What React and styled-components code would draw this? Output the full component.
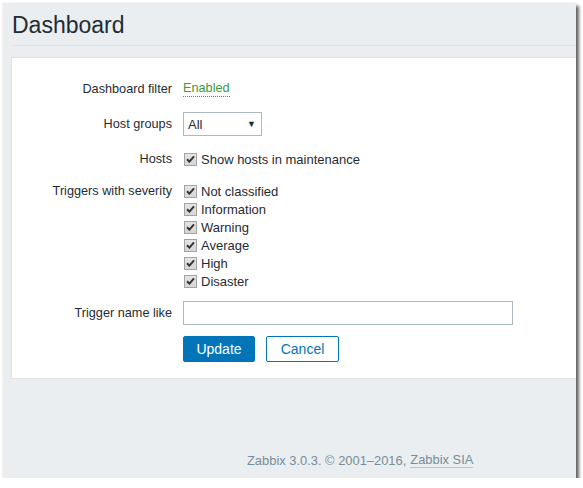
import React from "react";
import styled, { createGlobalStyle } from "styled-components";

const GlobalStyle = createGlobalStyle`
  html, body {
    margin: 0;
    padding: 0;
    background: #ffffff;
  }
  body {
    font-family: "Liberation Sans", Arial, sans-serif;
    color: #1f2c33;
  }
`;

const Window = styled.div`
  margin: 3px 0 0 3px;
  width: 573px;
  height: 475px;
  box-sizing: border-box;
  padding-left: 8px;
  background: #ebeef0;
  box-shadow: 3px 3px 3px rgba(0, 0, 0, 0.6), 0 0 2px rgba(0, 0, 0, 0.12);
  display: flex;
  flex-direction: column;
`;

const Header = styled.div`
  height: 43px;
  box-sizing: border-box;
  padding: 9px 0 0 1px;
  border-bottom: 1px solid #dde3e7;
`;

const Title = styled.h1`
  margin: 0;
  font-size: 23px;
  font-weight: normal;
  line-height: 26px;
  color: #1f2c33;
`;

const Panel = styled.div`
  margin-top: 11px;
  background: #ffffff;
  border: 1px solid #dde3e7;
  border-right: none;
  padding: 19px 0 16px;
`;

const Form = styled.div`
  display: grid;
  grid-template-columns: 160px 1fr;
  column-gap: 11px;
  row-gap: 11px;
  font-size: 12.7px;
`;

const Label = styled.div`
  text-align: right;
  min-height: ${(p) => (p.$top ? "18px" : "24px")};
  line-height: ${(p) => (p.$top ? "18px" : "24px")};
`;

const Field = styled.div`
  min-height: 24px;
  display: flex;
  align-items: ${(p) => (p.$top ? "flex-start" : "center")};
  gap: 11px;
`;

const FilterLink = styled.span`
  color: #3c9a3f;
  border-bottom: 1px dotted #3c9a3f;
  line-height: 15px;
`;

const Select = styled.div`
  width: 79px;
  height: 24px;
  box-sizing: border-box;
  border: 1px solid #acbbc2;
  display: flex;
  align-items: center;
  justify-content: space-between;
  padding: 0 5px 0 4px;
  font-size: 13px;
`;

const Arrow = styled.span`
  font-size: 9px;
  color: #1f2c33;
`;

const CheckList = styled.div`
  display: flex;
  flex-direction: column;
`;

const CheckRow = styled.label`
  display: flex;
  align-items: center;
  height: 18px;
  gap: 4px;
  padding-left: 1px;
  font-size: 13px;
`;

const Box = styled.span`
  width: 13px;
  height: 13px;
  box-sizing: border-box;
  border: 1px solid #a3a3a3;
  background: linear-gradient(#e4e4e4, #d6d6d6);
  display: inline-flex;
  align-items: center;
  justify-content: center;
`;

const TextInput = styled.div`
  width: 330px;
  height: 24px;
  box-sizing: border-box;
  border: 1px solid #acbbc2;
`;

const Button = styled.button`
  height: 26px;
  box-sizing: border-box;
  padding: 0;
  width: ${(p) => p.$w}px;
  font-family: "Liberation Sans", Arial, sans-serif;
  font-size: 14px;
  border-radius: 2px;
  border: 1px solid #0275b8;
  background: ${(p) => (p.$primary ? "#0275b8" : "#ffffff")};
  color: ${(p) => (p.$primary ? "#ffffff" : "#0275b8")};
`;

const Footer = styled.div`
  flex: 1;
  display: flex;
  align-items: flex-end;
  padding: 0 0 10px 236px;
  font-size: 12.9px;
  color: #768d99;
`;

const FooterLink = styled.span`
  border-bottom: 1px solid #b9c6cd;
  margin-left: 4px;
`;

const Check = () => (
  <Box>
    <svg width="9" height="8" viewBox="0 0 9 8">
      <path d="M1 4.2 L3.4 6.6 L8 1.3" fill="none" stroke="#333" strokeWidth="2" />
    </svg>
  </Box>
);

const severities = ["Not classified", "Information", "Warning", "Average", "High", "Disaster"];

const App = () => (
  <>
    <GlobalStyle />
    <Window>
      <Header>
        <Title>Dashboard</Title>
      </Header>
      <Panel>
        <Form>
          <Label>Dashboard filter</Label>
          <Field>
            <FilterLink>Enabled</FilterLink>
          </Field>

          <Label>Host groups</Label>
          <Field>
            <Select>
              All <Arrow>▼</Arrow>
            </Select>
          </Field>

          <Label>Hosts</Label>
          <Field>
            <CheckRow>
              <Check />
              Show hosts in maintenance
            </CheckRow>
          </Field>

          <Label $top>Triggers with severity</Label>
          <Field $top>
            <CheckList>
              {severities.map((s) => (
                <CheckRow key={s}>
                  <Check />
                  {s}
                </CheckRow>
              ))}
            </CheckList>
          </Field>

          <Label>Trigger name like</Label>
          <Field>
            <TextInput />
          </Field>

          <div />
          <Field>
            <Button $primary $w={72}>Update</Button>
            <Button $w={73}>Cancel</Button>
          </Field>
        </Form>
      </Panel>
      <Footer>
        Zabbix 3.0.3. © 2001–2016,<FooterLink>Zabbix SIA</FooterLink>
      </Footer>
    </Window>
  </>
);

export default App;
